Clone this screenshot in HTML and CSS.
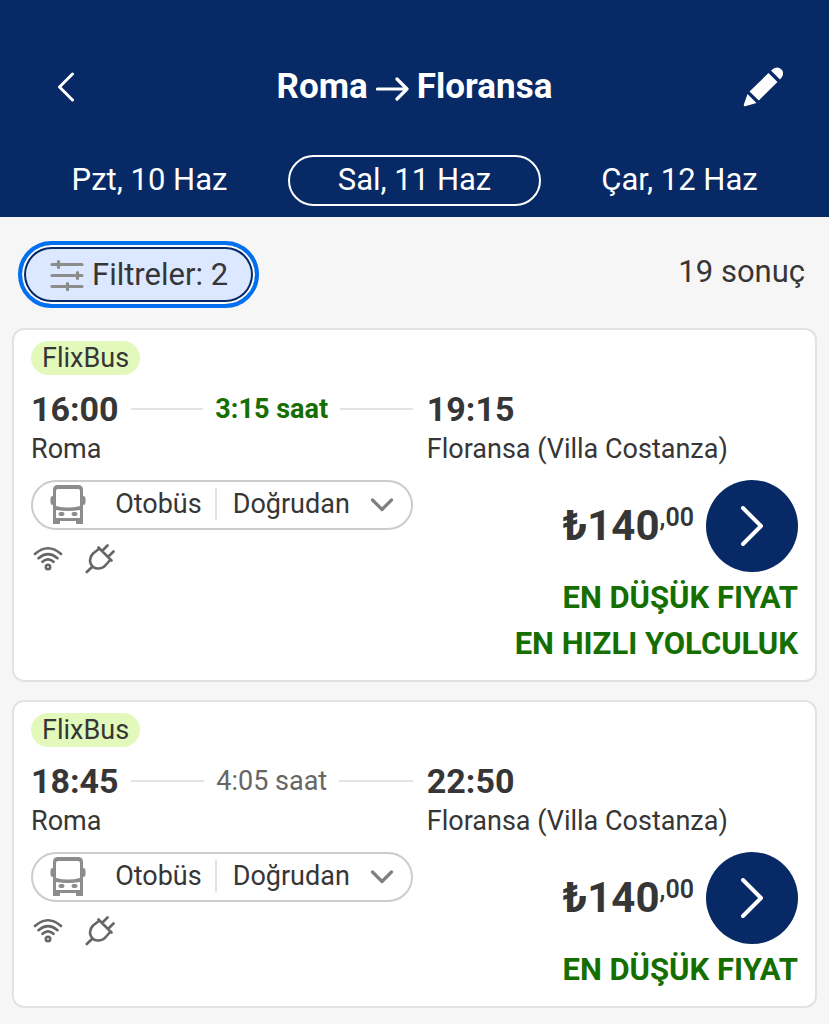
FILE: index.html
```html
<!DOCTYPE html>
<html lang="tr">
<head>
<meta charset="utf-8">
<meta name="viewport" content="width=device-width, initial-scale=1">
<title>Roma → Floransa</title>
<link rel="stylesheet" href="styles.css">
</head>
<body>
<svg class="sprite" aria-hidden="true">
  <symbol id="bus" viewBox="0 0 36 40">
    <path fill="#8c8c8c" fill-rule="evenodd" d="M8 0H28Q33 0 33 5V11Q35.500 11 35.500 14V17Q35.500 20 33 20V39H26V36H10V39H3V20Q.5 20 .5 17V14Q.5 11 3 11V5Q3 0 8 0ZM8 4Q6 4 6 6V21Q18 24 30 21V6Q30 4 28 4ZM6 25V33H30V25Q18 27 6 25Z"/>
    <rect x="8.500" y="27" width="6" height="4" rx="2" fill="#8c8c8c"/>
    <rect x="21.500" y="27" width="6" height="4" rx="2" fill="#8c8c8c"/>
  </symbol>
  <symbol id="wifi" viewBox="0 0 30 26">
    <g fill="none" stroke="#666" stroke-width="2.600" stroke-linecap="round">
      <path d="M2 8Q15-3.500 28 8M5.500 12.200Q15 4 24.500 12.200M9.500 15.800Q15 11 20.500 15.800"/>
      <circle cx="15" cy="21" r="2.200"/>
    </g>
  </symbol>
  <symbol id="plug" viewBox="0 0 30 30">
    <g fill="none" stroke="#666" stroke-width="2.600" stroke-linecap="round" stroke-linejoin="round">
      <path d="M1.800 28 7.500 22.500M13.500 3.500 26.500 16.500M14.500 4.500 8 9.500C2 16 6 25 14 24.500 19 24 20 22 25.500 15.500M17.500 6.500 22.500 1.500M23.500 12.500 28.500 7.500"/>
    </g>
  </symbol>
  <symbol id="down" viewBox="0 0 24 14">
    <path d="M2.500 2 12 11.500 21.500 2" fill="none" stroke="#808080" stroke-width="3.200" stroke-linecap="round" stroke-linejoin="round"/>
  </symbol>
  <symbol id="next" viewBox="0 0 22 40">
    <path d="M2 2 20 20 2 38" fill="none" stroke="#fff" stroke-width="3.900" stroke-linecap="round" stroke-linejoin="round"/>
  </symbol>
</svg>

<header class="header">
  <div class="title-bar">
    <button class="icon-button" type="button" aria-label="Geri">
      <svg width="18" height="30" viewBox="0 0 18 30"><path d="M15.500 2 2.500 15 15.500 28" fill="none" stroke="#fff" stroke-width="3" stroke-linecap="round" stroke-linejoin="round"/></svg>
    </button>
    <h1 class="title">
      <span>Roma</span>
      <svg class="arrow" width="33" height="24" viewBox="0 0 33 24"><path d="M1.500 12H31M21 2 31 12 21 22" fill="none" stroke="#fff" stroke-width="3.200" stroke-linecap="round" stroke-linejoin="round"/></svg>
      <span>Floransa</span>
    </h1>
    <button class="icon-button" type="button" aria-label="Düzenle">
      <svg width="40" height="40" viewBox="0 0 40 40" fill="#fff"><path d="M25.500 6 34.500 15 15.800 33.500 6.500 24.500ZM28 3.500Q34-2 38.500 2.500 42.500 7 37 12.500ZM4.500 27 13.500 36 3 39Q0 40 1 37Z"/></svg>
    </button>
  </div>
  <nav class="dates" aria-label="Tarih">
    <button class="date" type="button">Pzt, 10 Haz</button>
    <button class="date date-active" type="button" aria-current="date">Sal, 11 Haz</button>
    <button class="date" type="button">Çar, 12 Haz</button>
  </nav>
</header>

<main class="results">
  <div class="toolbar">
    <button class="filter" type="button">
      <svg width="34" height="32" viewBox="0 0 34 32"><path d="M2 5.500H32M2 16.500H32M2 27.500H32M8.500 2.500V8.500M27.500 13.500V19.500M17.500 24.500V30.500" fill="none" stroke="#8c8c8c" stroke-width="3.200" stroke-linecap="round"/></svg>
      <span>Filtreler: 2</span>
    </button>
    <span class="count">19 sonuç</span>
  </div>

  <article class="card">
    <span class="badge">FlixBus</span>
    <div class="trip">
      <section class="leg">
        <div class="time-row">
          <time class="time">16:00</time>
          <span class="duration duration-fast">3:15 saat</span>
        </div>
        <span class="place">Roma</span>
        <button class="details" type="button">
          <svg width="36" height="40"><use href="#bus"/></svg>
          <span class="mode">Otobüs</span>
          <span class="direct">Doğrudan</span>
          <svg width="24" height="14"><use href="#down"/></svg>
        </button>
        <div class="amenities">
          <svg role="img" aria-label="Wi-Fi" width="30" height="26"><use href="#wifi"/></svg>
          <svg role="img" aria-label="Priz" width="30" height="30"><use href="#plug"/></svg>
        </div>
      </section>
      <section class="leg">
        <div class="time-row"><time class="time">19:15</time></div>
        <span class="place">Floransa (Villa Costanza)</span>
        <div class="offer">
          <span class="price">₺140<span class="cents">,00</span></span>
          <button class="select" type="button" aria-label="Seç"><svg width="22" height="40"><use href="#next"/></svg></button>
        </div>
        <div class="labels">
          <strong class="label">EN DÜŞÜK FIYAT</strong>
          <strong class="label">EN HIZLI YOLCULUK</strong>
        </div>
      </section>
    </div>
  </article>

  <article class="card">
    <span class="badge">FlixBus</span>
    <div class="trip">
      <section class="leg">
        <div class="time-row">
          <time class="time">18:45</time>
          <span class="duration">4:05 saat</span>
        </div>
        <span class="place">Roma</span>
        <button class="details" type="button">
          <svg width="36" height="40"><use href="#bus"/></svg>
          <span class="mode">Otobüs</span>
          <span class="direct">Doğrudan</span>
          <svg width="24" height="14"><use href="#down"/></svg>
        </button>
        <div class="amenities">
          <svg role="img" aria-label="Wi-Fi" width="30" height="26"><use href="#wifi"/></svg>
          <svg role="img" aria-label="Priz" width="30" height="30"><use href="#plug"/></svg>
        </div>
      </section>
      <section class="leg">
        <div class="time-row"><time class="time">22:50</time></div>
        <span class="place">Floransa (Villa Costanza)</span>
        <div class="offer">
          <span class="price">₺140<span class="cents">,00</span></span>
          <button class="select" type="button" aria-label="Seç"><svg width="22" height="40"><use href="#next"/></svg></button>
        </div>
        <div class="labels">
          <strong class="label">EN DÜŞÜK FIYAT</strong>
        </div>
      </section>
    </div>
  </article>
</main>
</body>
</html>
```
FILE: styles.css
```css
* {
  box-sizing: border-box;
}

body {
  margin: 0;
  background: #f6f6f6;
  color: #363636;
  font-family: Roboto, "Liberation Sans", sans-serif;
  font-size: 27px;
}

button {
  border: 0;
  padding: 0;
  background: none;
  color: inherit;
  font: inherit;
  cursor: pointer;
}

svg {
  display: block;
  flex: none;
}

.sprite {
  position: absolute;
  width: 0;
  height: 0;
}

.header {
  padding: 56px 23px 11px;
  background: #072966;
  color: #fff;
}

.title-bar {
  display: flex;
  align-items: center;
  justify-content: space-between;
  padding: 0 13px;
}

.icon-button {
  display: grid;
  place-items: center;
  width: 60px;
  height: 60px;
}

.title {
  display: flex;
  align-items: center;
  gap: 8px;
  margin: 0;
  font-size: 35px;
  font-weight: 700;
  line-height: 62px;
}

.arrow {
  margin-top: 4px;
}

.dates {
  display: grid;
  grid-template-columns: repeat(3, 1fr);
  gap: 12px;
  margin-top: 37px;
}

.date {
  height: 51px;
  padding-bottom: 2px;
  border: 2px solid transparent;
  border-radius: 26px;
  font-size: 31px;
}

.date-active {
  border-color: #fff;
}

.results {
  padding: 24px 12px 17px;
}

.toolbar {
  display: flex;
  align-items: center;
  justify-content: space-between;
  padding: 0 12px 0 6px;
  margin-bottom: 20px;
}

.filter {
  display: flex;
  align-items: center;
  gap: 8px;
  height: 67px;
  padding: 0 27px 0 28px;
  border: 4px solid #0070f0;
  border-radius: 34px;
  background: #dce8ff;
  box-shadow: inset 0 0 0 2px #fff, inset 0 0 0 4px #072966;
  font-size: 31px;
}

.count {
  padding-bottom: 6px;
  font-size: 31px;
}

.card {
  padding: 11px 17px 13px;
  border: 2px solid #e2e2e2;
  border-radius: 12px;
  background: #fff;
}

.card + .card {
  margin-top: 18px;
}

.badge {
  display: inline-block;
  padding: 0 11px;
  border-radius: 17px;
  background: #e3f9bb;
  line-height: 34px;
  vertical-align: top;
}

.trip {
  display: grid;
  grid-template-columns: 36fr 35fr;
  gap: 14px;
  margin-top: 14px;
}

.leg {
  display: flex;
  flex-direction: column;
  min-width: 0;
}

.time-row {
  display: flex;
  align-items: center;
  gap: 12px;
  height: 40px;
}

.time {
  font-size: 34px;
  font-weight: 700;
}

.duration {
  display: flex;
  flex: 1;
  align-items: center;
  gap: 12px;
  color: #666;
}

.duration::before,
.duration::after {
  content: "";
  flex: 1;
  height: 2px;
  background: #e2e2e2;
}

.duration-fast {
  color: #146e00;
  font-weight: 700;
}

.place {
  line-height: 40px;
}

.details {
  display: flex;
  align-items: center;
  height: 50px;
  margin-top: 11px;
  padding: 0 17px;
  border: 2px solid #ccc;
  border-radius: 25px;
}

.mode {
  margin-left: auto;
  padding-right: 13px;
  border-right: 2px solid #e2e2e2;
  line-height: 32px;
}

.direct {
  padding: 0 20px 0 16px;
}

.mode,
.direct {
  margin-bottom: 2px;
}

.amenities {
  display: flex;
  align-items: center;
  gap: 22px;
  margin: 14px 2px 0;
}

.offer {
  display: flex;
  align-items: center;
  justify-content: flex-end;
  gap: 12px;
  margin-top: 11px;
}

.price {
  display: flex;
  align-items: flex-start;
  font-size: 42px;
  font-weight: 700;
  line-height: 46px;
}

.cents {
  font-size: 25px;
  font-weight: 600;
  line-height: 30px;
}

.select {
  display: grid;
  place-items: center;
  width: 92px;
  height: 92px;
  border-radius: 50%;
  background: #072966;
}

.labels {
  display: flex;
  flex-direction: column;
  align-items: flex-end;
  margin-top: 3px;
}

.label {
  color: #146e00;
  font-size: 31px;
  font-weight: 700;
  line-height: 46px;
}
```
